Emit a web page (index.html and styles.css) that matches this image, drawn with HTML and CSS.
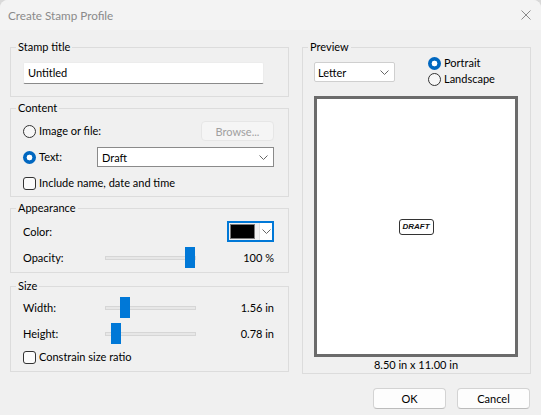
FILE: index.html
```html
<!DOCTYPE html>
<html>
<head>
<meta charset="utf-8">
<link rel="stylesheet" href="styles.css">
</head>
<body>
<div class="window">
  <div class="titlebar">
    <span class="title">Create Stamp Profile</span>
    <svg class="close" width="10" height="10" viewBox="0 0 10 10"><path d="M0.5 0.5 L9.5 9.5 M9.5 0.5 L0.5 9.5" stroke="#8a8a8a" stroke-width="1" fill="none"/></svg>
  </div>
  <div class="main">
    <div class="left">
      <section class="group g-title">
        <div class="gtitle">Stamp title</div>
        <div class="gbody">
          <div class="textbox">Untitled</div>
        </div>
      </section>
      <section class="group g-content">
        <div class="gtitle">Content</div>
        <div class="gbody">
          <div class="row">
            <span class="opt"><span class="radio"></span>Image or file:</span>
            <span class="btn disabled browse">Browse...</span>
          </div>
          <div class="row">
            <span class="opt"><span class="radio checked"></span>Text:</span>
            <span class="combo draft">Draft<svg class="chev" width="9" height="5" viewBox="0 0 9 5"><path d="M0.5 0.5 L4.5 4.5 L8.5 0.5" stroke="#666" fill="none"/></svg></span>
          </div>
          <div class="row">
            <span class="opt"><span class="check"></span>Include name, date and time</span>
          </div>
        </div>
      </section>
      <section class="group g-appear">
        <div class="gtitle">Appearance</div>
        <div class="gbody">
          <div class="row">
            <span>Color:</span>
            <span class="colorbtn"><span class="swatch"></span><span class="drop"><svg width="9" height="5" viewBox="0 0 9 5"><path d="M0.5 0.5 L4.5 4.5 L8.5 0.5" stroke="#666" fill="none"/></svg></span></span>
          </div>
          <div class="srow">
            <span>Opacity:</span>
            <span class="slider"><span class="track"></span><span class="thumb" style="left:80px"></span></span>
            <span class="val">100 %</span>
          </div>
        </div>
      </section>
      <section class="group g-size">
        <div class="gtitle">Size</div>
        <div class="gbody">
          <div class="srow">
            <span>Width:</span>
            <span class="slider"><span class="track"></span><span class="thumb" style="left:15px"></span></span>
            <span class="val">1.56 in</span>
          </div>
          <div class="srow">
            <span>Height:</span>
            <span class="slider"><span class="track"></span><span class="thumb" style="left:6px"></span></span>
            <span class="val">0.78 in</span>
          </div>
          <div class="row">
            <span class="opt"><span class="check"></span>Constrain size ratio</span>
          </div>
        </div>
      </section>
    </div>
    <section class="group preview">
      <div class="gtitle">Preview</div>
      <div class="pbody">
        <div class="ptop">
          <span class="combo letter">Letter<svg class="chev" width="9" height="5" viewBox="0 0 9 5"><path d="M0.5 0.5 L4.5 4.5 L8.5 0.5" stroke="#666" fill="none"/></svg></span>
          <div class="orient">
            <span class="opt"><span class="radio checked"></span>Portrait</span>
            <span class="opt"><span class="radio"></span>Landscape</span>
          </div>
        </div>
        <div class="page">
          <span class="stamp">DRAFT</span>
        </div>
        <div class="caption">8.50 in x 11.00 in</div>
      </div>
    </section>
  </div>
  <div class="footer">
    <span class="btn">OK</span>
    <span class="btn">Cancel</span>
  </div>
</div>
</body>
</html>
```
FILE: styles.css
```css
html, body {
  margin: 0;
  padding: 0;
  background: #d9d9d9;
}
body {
  width: 541px;
  height: 415px;
  font-family: Lato, "Noto Sans", sans-serif;
  font-size: 11px;
  color: #000;
}
.window {
  width: 541px;
  height: 415px;
  background: #f0f0f0;
  border-radius: 8px 8px 0 0;
  overflow: hidden;
  display: flex;
  flex-direction: column;
}
.titlebar {
  height: 30px;
  flex: none;
  background: #f3f3f3;
  display: flex;
  align-items: center;
  justify-content: space-between;
  padding: 0 10px 0 8px;
}
.title {
  color: #8a8a8a;
  font-size: 11.7px;
  line-height: 16px;
}
.main {
  display: grid;
  grid-template-columns: 279px 229px;
  column-gap: 13px;
  padding: 0 0 0 10px;
}
.left {
  display: flex;
  flex-direction: column;
}
.group {
  border: 1px solid #dcdcdc;
}
.gtitle {
  margin: -9px 0 0 5px;
  padding: 0 2px;
  width: fit-content;
  line-height: 16px;
  background: #f0f0f0;
}
.gbody {
  padding: 0 14px 0 12px;
  display: flex;
  flex-direction: column;
}
.g-title { margin-top: 17px; }
.g-title .gbody { padding-top: 7px; padding-bottom: 12px; }
.g-content { margin-top: 11px; }
.g-content .gbody { padding-top: 5px; padding-bottom: 3px; gap: 6px; }
.g-appear { margin-top: 11px; }
.g-appear .gbody { padding-top: 5px; padding-bottom: 4px; gap: 6px; }
.g-size { margin-top: 13px; }
.g-size .gbody { padding-top: 3px; padding-bottom: 4px; }
.g-size .srow + .srow { margin-top: 5px; }
.g-size .row { margin-top: 3px; }

.textbox {
  width: 241px;
  height: 22px;
  box-sizing: border-box;
  background: #fff;
  border: 1px solid #ececec;
  border-bottom-color: #8a8a8a;
  border-radius: 2px;
  padding-left: 4px;
  line-height: 20px;
}
.row {
  height: 20px;
  display: flex;
  align-items: center;
  justify-content: space-between;
}
.opt {
  display: flex;
  align-items: center;
  gap: 3px;
  line-height: 16px;
}
.radio {
  width: 13px;
  height: 13px;
  box-sizing: border-box;
  border-radius: 50%;
  border: 1px solid #333;
  background: #f7f7f7;
  flex: none;
}
.radio.checked {
  border: none;
  background: radial-gradient(circle, #fff 0 2.6px, #0067c0 3.2px);
}
.check {
  width: 13px;
  height: 13px;
  box-sizing: border-box;
  border-radius: 3px;
  border: 1px solid #333;
  background: #fbfbfb;
  flex: none;
}
.btn {
  display: flex;
  align-items: center;
  justify-content: center;
  box-sizing: border-box;
  height: 21px;
  width: 73px;
  background: #fdfdfd;
  border: 1px solid #d3d3d3;
  border-bottom-color: #bcbcbc;
  border-radius: 4px;
}
.btn.disabled.browse {
  width: 73px;
  height: 20px;
  background: #f5f5f5;
  border: 1px solid #e6e6e6;
  color: #a0a0a0;
}
.combo {
  box-sizing: border-box;
  height: 20px;
  background: #fff;
  display: flex;
  align-items: center;
  justify-content: space-between;
  padding: 0 5px 0 4px;
}
.combo.draft {
  width: 177px;
  border: 1px solid #8a8a8a;
}
.combo.letter {
  width: 81px;
  border: 1px solid #cfcfcf;
  border-radius: 2px;
  padding-left: 3px;
}
.colorbtn {
  box-sizing: border-box;
  width: 47px;
  height: 21px;
  border: 2px solid #0078d7;
  display: flex;
  align-items: center;
  padding-left: 1px;
  background: #f0f0f0;
}
.swatch {
  width: 25px;
  height: 15px;
  box-sizing: border-box;
  background: #000;
  border: 1px solid #7a7a7a;
}
.drop {
  margin-left: auto;
  width: 13px;
  height: 17px;
  box-sizing: border-box;
  background: #fff;
  border-left: 1px solid #e0e0e0;
  display: flex;
  align-items: center;
  justify-content: center;
}
.srow {
  display: grid;
  grid-template-columns: 82px 91px 1fr;
  align-items: center;
  height: 21px;
}
.slider {
  position: relative;
  height: 21px;
  display: flex;
  align-items: center;
}
.track {
  width: 91px;
  height: 4px;
  box-sizing: border-box;
  background: #e7e7e7;
  border: 1px solid #d6d6d6;
}
.thumb {
  position: absolute;
  top: 0;
  width: 10px;
  height: 21px;
  background: #0078d7;
}
.val {
  text-align: right;
}
.preview {
  margin-top: 17px;
}
.pbody {
  padding: 0 0 0 11px;
}
.ptop {
  height: 41px;
  display: flex;
  align-items: flex-start;
}
.ptop .combo {
  margin-top: 7px;
}
.orient {
  margin-left: 33px;
  display: flex;
  flex-direction: column;
}
.orient .opt {
  height: 16px;
}
.page {
  width: 204px;
  height: 261px;
  box-sizing: border-box;
  border: 3px solid #6b6b6b;
  background: #fff;
  display: flex;
  align-items: center;
  justify-content: center;
}
.stamp {
  box-sizing: border-box;
  width: 35px;
  height: 16px;
  border: 1.6px solid #333;
  border-radius: 3px;
  font-family: "Liberation Sans", Arial, sans-serif;
  font-weight: bold;
  font-style: italic;
  font-size: 8px;
  display: flex;
  align-items: center;
  justify-content: center;
  color: #111;
}
.caption {
  width: 204px;
  text-align: center;
  line-height: 16px;
}
.footer {
  display: flex;
  justify-content: flex-end;
  gap: 11px;
  padding: 14px 11px 0 0;
}
```
